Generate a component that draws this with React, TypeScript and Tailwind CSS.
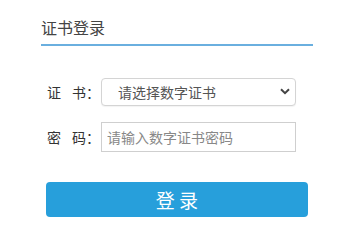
import React from "react";

const font = { fontFamily: '"Noto Sans CJK SC", "Noto Sans", sans-serif' };

export default function App() {
  return (
    <div className="min-h-screen w-[346px] bg-white text-[#333]" style={font}>
      <div className="pl-[41px] pt-[15px]">
        {/* Header */}
        <div className="w-[272px] border-b-2 border-[#6aafdf] pb-[5px] text-[16px] leading-[24px] text-[#444]">
          证书登录
        </div>
      </div>

      <form className="pl-[46px] pt-[32px]">
        <div className="flex items-center">
          <label className="flex w-[55px] text-[14px] leading-[20px] text-[#333]">
            <span className="ml-[1px]">证</span>
            <span className="ml-[11px]">书</span>
            <span>：</span>
          </label>
          <div className="relative">
            <select
              defaultValue=""
              className="h-[28px] w-[195px] appearance-none rounded-[4px] border border-[#d4d4d4] bg-white pl-[16px] text-[14px] leading-[20px] text-[#555] shadow-[0_1px_1px_rgba(0,0,0,0.05)] outline-none"
            >
              <option value="">请选择数字证书</option>
            </select>
            <svg
              className="pointer-events-none absolute right-[6px] top-[10px] h-[7px] w-[10px]"
              viewBox="0 0 10 7"
              fill="none"
              stroke="#444"
              strokeWidth="2"
            >
              <path d="M1 1.2L5 5.2L9 1.2" />
            </svg>
          </div>
        </div>

        <div className="mt-[16px] flex items-center">
          <label className="flex w-[55px] text-[14px] leading-[20px] text-[#333]">
            <span className="ml-[1px]">密</span>
            <span className="ml-[11px]">码</span>
            <span>：</span>
          </label>
          <input
            type="password"
            placeholder="请输入数字证书密码"
            className="h-[30px] w-[195px] border border-[#cfcfcf] px-[5px] text-[14px] text-[#555] outline-none placeholder:text-[#888]"
          />
        </div>

        <button
          type="button"
          className="mt-[30px] h-[35px] w-[262px] rounded-[4px] bg-[#279fdb] text-[19px] leading-[24px] text-white"
        >
          登 录
        </button>
      </form>
    </div>
  );
}
